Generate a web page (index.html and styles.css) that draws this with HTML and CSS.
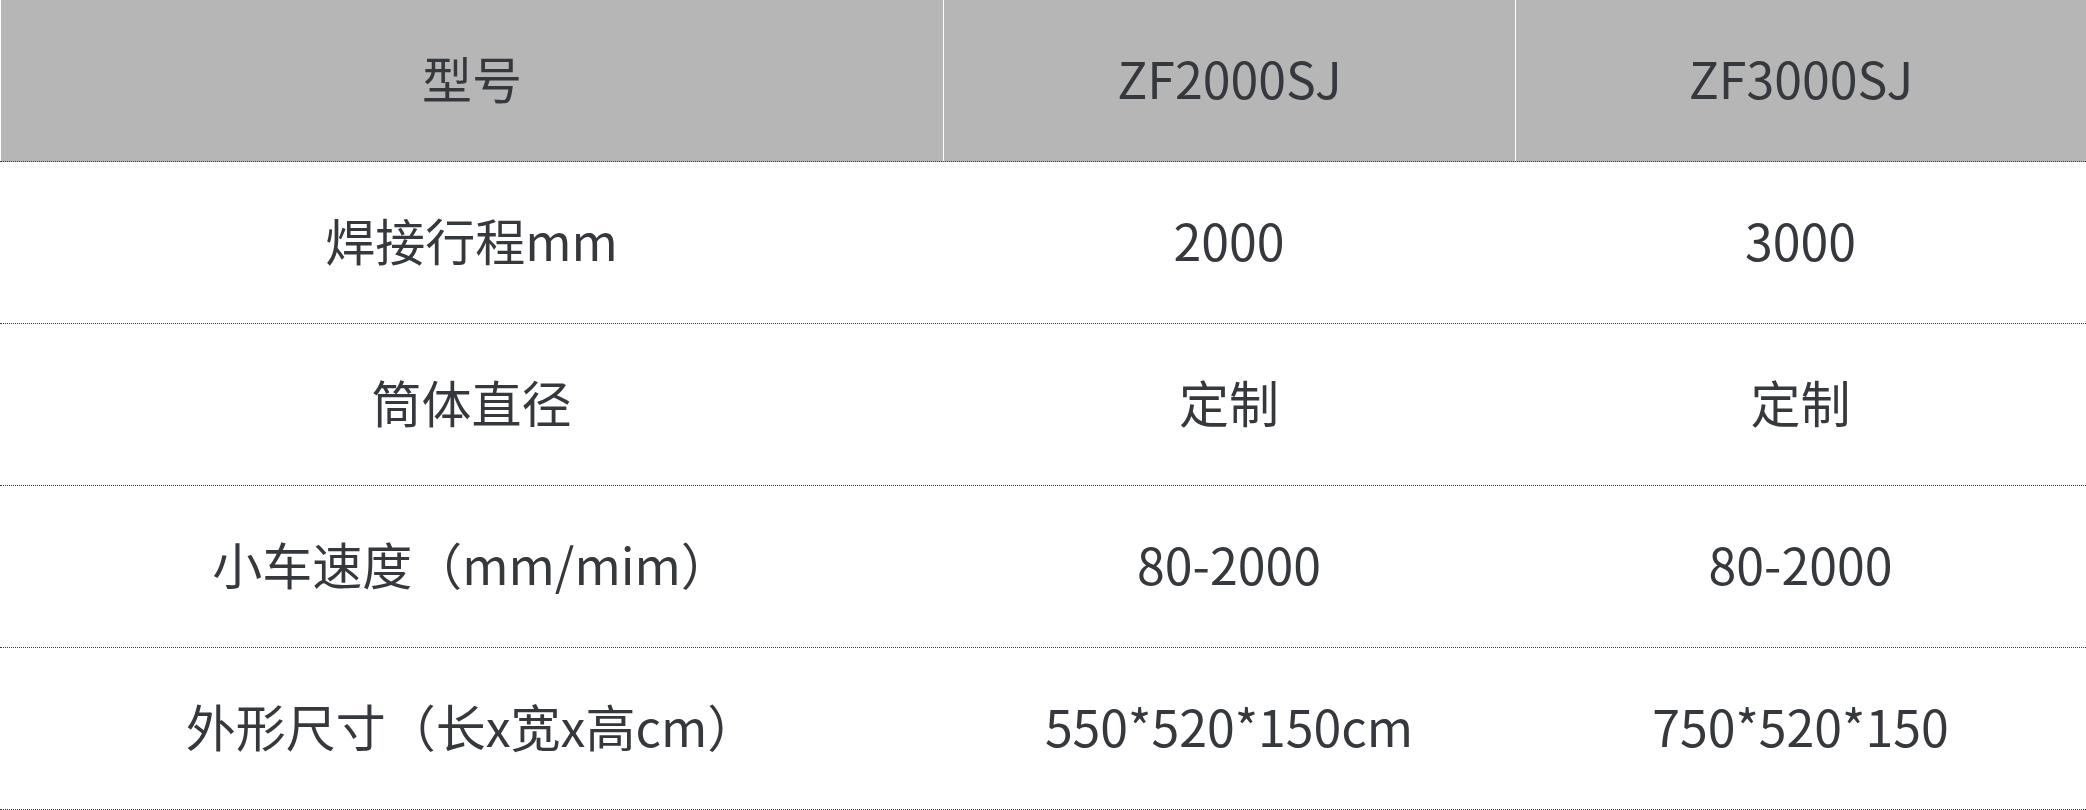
FILE: index.html
```html
<!DOCTYPE html>
<html lang="zh-CN">
<head>
<meta charset="utf-8">
<title>参数表</title>
<link rel="stylesheet" href="styles.css">
</head>
<body>
<div class="spec-table">
  <div class="row head">
    <div class="cell">型号</div>
    <div class="cell">ZF2000SJ</div>
    <div class="cell">ZF3000SJ</div>
  </div>
  <div class="row">
    <div class="cell">焊接行程mm</div>
    <div class="cell">2000</div>
    <div class="cell">3000</div>
  </div>
  <div class="row">
    <div class="cell">筒体直径</div>
    <div class="cell">定制</div>
    <div class="cell">定制</div>
  </div>
  <div class="row">
    <div class="cell">小车速度（mm/mim）</div>
    <div class="cell">80-2000</div>
    <div class="cell">80-2000</div>
  </div>
  <div class="row">
    <div class="cell">外形尺寸（长x宽x高cm）</div>
    <div class="cell">550*520*150cm</div>
    <div class="cell">750*520*150</div>
  </div>
</div>
</body>
</html>
```

FILE: styles.css
```css
html, body {
  margin: 0;
  padding: 0;
  background: #ffffff;
}

body {
  font-family: "Noto Sans CJK SC", "Noto Sans", sans-serif;
  color: #35383d;
}

.spec-table {
  width: 100%;
}

.row {
  display: grid;
  grid-template-columns: 943fr 572fr 571fr;
  height: 162px;
  box-sizing: border-box;
  border-bottom: 1px dotted #3a3a3a;
}

.cell {
  display: flex;
  align-items: center;
  justify-content: center;
  padding-bottom: 8px;
  font-size: 50px;
  line-height: 1;
  white-space: nowrap;
}

.head {
  background: #b6b6b6;
}

.head .cell {
  border-left: 1px solid #ffffff;
}
```
